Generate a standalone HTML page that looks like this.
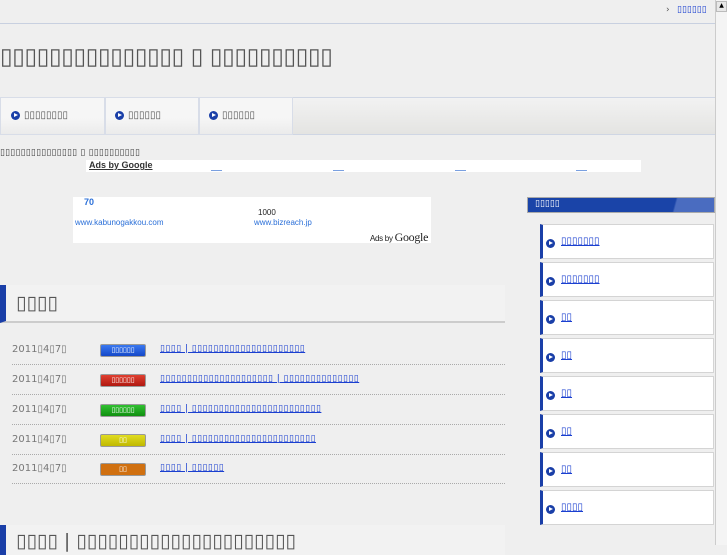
<!DOCTYPE html>
<html><head><meta charset="utf-8"><style>
*{margin:0;padding:0;box-sizing:border-box}
body{width:727px;height:545px;overflow:hidden;background:#efefef;font-family:"DejaVu Sans","Liberation Sans",sans-serif;color:#555;position:relative}
.a{position:absolute}
.t{font-size:10px;white-space:nowrap}
.lnk{color:#1a3fd0;text-decoration:underline}
.side{left:540px;width:174px;height:35px;background:#fff;border:1px solid #d4d4d4;border-left:3px solid #1a3fa8}
.side span{position:absolute;left:18px;top:11px;font-size:10px}
.dot{position:absolute;width:9px;height:9px;border-radius:50%;background:#1a3fa8}
.dot:after{content:"";position:absolute;left:3px;top:2px;border-left:4px solid #fff;border-top:2.5px solid transparent;border-bottom:2.5px solid transparent}
.badge{left:100px;width:46px;height:13px;border:1px solid #999;border-radius:2px;color:#fff;font-size:7px;text-align:center;line-height:11px}
.row{left:12px;width:493px;border-bottom:1px dotted #aaa}
.nl{font-size:9px;letter-spacing:0.45px}
</style></head><body>
<div class="a" style="left:0;top:23px;width:715px;border-top:1px solid #c8d0e0"></div>
<div class="a t" style="left:666px;top:5px;font-size:9px;color:#555">›</div>
<div class="a t" style="left:677px;top:5px;font-size:9px;color:#1a3fd0">▯▯▯▯▯▯</div>
<div class="a" style="left:715px;top:0;width:12px;height:545px;background:#f4f4f4;border-left:1px solid #ccc"></div>
<div class="a" style="left:716px;top:1px;width:11px;height:11px;background:#e8e8e8;border:1px solid #bbb;font-size:6px;text-align:center;color:#000">▲</div>
<div class="a" style="left:0;top:44px;font-size:23px;color:#555;white-space:nowrap;letter-spacing:-0.4px">▯▯▯▯▯▯▯▯▯▯▯▯▯▯▯ ▯ ▯▯▯▯▯▯▯▯▯▯</div>
<div class="a" style="left:0;top:97px;width:715px;height:38px;background:linear-gradient(#f2f2f2,#e4e4e2);border-top:1px solid #cfd6e4;border-bottom:1px solid #cfd6e4"></div>
<div class="a" style="left:0;top:97px;width:105px;height:38px;border:1px solid #d8dde8;background:linear-gradient(#f6f6f6 55%,#ebebeb)"></div>
<div class="a" style="left:105px;top:97px;width:94px;height:38px;border:1px solid #d8dde8;background:linear-gradient(#f6f6f6 55%,#ebebeb)"></div>
<div class="a" style="left:199px;top:97px;width:94px;height:38px;border:1px solid #d8dde8;background:linear-gradient(#f6f6f6 55%,#ebebeb)"></div>
<div class="dot" style="left:11px;top:111px"></div><div class="a t" style="left:24px;top:110px">▯▯▯▯▯▯▯▯</div>
<div class="dot" style="left:115px;top:111px"></div><div class="a t" style="left:128px;top:110px">▯▯▯▯▯▯</div>
<div class="dot" style="left:209px;top:111px"></div><div class="a t" style="left:222px;top:110px">▯▯▯▯▯▯</div>
<div class="a t" style="left:0;top:148px;font-size:9px;color:#444;letter-spacing:0.2px">▯▯▯▯▯▯▯▯▯▯▯▯▯▯▯ ▯ ▯▯▯▯▯▯▯▯▯▯</div>
<div class="a" style="left:86px;top:160px;width:555px;height:12px;background:#fff"></div>
<div class="a t" style="left:89px;top:160px;font-size:9px;font-weight:bold;color:#333;text-decoration:underline;font-family:'Liberation Sans',sans-serif">Ads by Google</div>
<div class="a" style="left:211px;top:170px;width:11px;border-top:1px solid #7aa0e0"></div>
<div class="a" style="left:333px;top:170px;width:11px;border-top:1px solid #7aa0e0"></div>
<div class="a" style="left:455px;top:170px;width:11px;border-top:1px solid #7aa0e0"></div>
<div class="a" style="left:576px;top:170px;width:11px;border-top:1px solid #7aa0e0"></div>
<div class="a" style="left:73px;top:197px;width:358px;height:46px;background:#fff"></div>
<div class="a t" style="left:84px;top:197px;font-size:9px;font-weight:bold;color:#2a6fd8;font-family:'Liberation Sans',sans-serif">70</div>
<div class="a t" style="left:258px;top:208px;font-size:8px;color:#222;font-family:'Liberation Sans',sans-serif">1000</div>
<div class="a t" style="left:75px;top:218px;font-size:8px;color:#2a6fd8;font-family:'Liberation Sans',sans-serif">www.kabunogakkou.com</div>
<div class="a t" style="left:254px;top:218px;font-size:8px;color:#2a6fd8;font-family:'Liberation Sans',sans-serif">www.bizreach.jp</div>
<div class="a t" style="left:370px;top:230px;font-size:8px;color:#222;font-family:'Liberation Sans',sans-serif;letter-spacing:-0.3px">Ads by <span style="font-family:'Liberation Serif',serif;font-size:12px">Google</span></div>
<div class="a" style="left:527px;top:197px;width:188px;height:16px;background:linear-gradient(105deg,#1a44a8 78%,#4a6cc0 79%);border:1px solid #aaa"></div>
<div class="a t" style="left:535px;top:199px;color:#fff;font-size:9px">▯▯▯▯▯</div>
<div class="a side" style="top:224px"><div class="dot" style="left:3px;top:14px"></div><span class="lnk">▯▯▯▯▯▯▯</span></div>
<div class="a side" style="top:262px"><div class="dot" style="left:3px;top:14px"></div><span class="lnk">▯▯▯▯▯▯▯</span></div>
<div class="a side" style="top:300px"><div class="dot" style="left:3px;top:14px"></div><span class="lnk">▯▯</span></div>
<div class="a side" style="top:338px"><div class="dot" style="left:3px;top:14px"></div><span class="lnk">▯▯</span></div>
<div class="a side" style="top:376px"><div class="dot" style="left:3px;top:14px"></div><span class="lnk">▯▯</span></div>
<div class="a side" style="top:414px"><div class="dot" style="left:3px;top:14px"></div><span class="lnk">▯▯</span></div>
<div class="a side" style="top:452px"><div class="dot" style="left:3px;top:14px"></div><span class="lnk">▯▯</span></div>
<div class="a side" style="top:490px"><div class="dot" style="left:3px;top:14px"></div><span class="lnk">▯▯▯▯</span></div>
<div class="a" style="left:0;top:285px;width:505px;height:38px;background:#f2f2f2;border-bottom:2px solid #ccc;border-left:6px solid #1a3fa8"></div>
<div class="a t" style="left:16px;top:292px;font-size:19px;color:#555">▯▯▯▯</div>
<div class="a row" style="top:340px;height:25px"></div>
<div class="a row" style="top:370px;height:25px"></div>
<div class="a row" style="top:400px;height:25px"></div>
<div class="a row" style="top:430px;height:25px"></div>
<div class="a row" style="top:460px;height:24px"></div>
<div class="a t" style="left:12px;top:344px;color:#777">2011▯4▯7▯</div>
<div class="a t" style="left:12px;top:374px;color:#777">2011▯4▯7▯</div>
<div class="a t" style="left:12px;top:404px;color:#777">2011▯4▯7▯</div>
<div class="a t" style="left:12px;top:434px;color:#777">2011▯4▯7▯</div>
<div class="a t" style="left:12px;top:463px;color:#777">2011▯4▯7▯</div>
<div class="a badge" style="top:344px;background:linear-gradient(#3a78f0,#1448c8)">▯▯▯▯▯▯</div>
<div class="a badge" style="top:374px;background:linear-gradient(#e04030,#b01810)">▯▯▯▯▯▯</div>
<div class="a badge" style="top:404px;background:linear-gradient(#30c030,#109010)">▯▯▯▯▯▯</div>
<div class="a badge" style="top:434px;background:linear-gradient(#e0dc20,#c0b800)">▯▯</div>
<div class="a badge" style="top:463px;background:#d07010">▯▯</div>
<div class="a t lnk nl" style="left:160px;top:344px">▯▯▯▯ | ▯▯▯▯▯▯▯▯▯▯▯▯▯▯▯▯▯▯▯▯▯</div>
<div class="a t lnk nl" style="left:160px;top:374px">▯▯▯▯▯▯▯▯▯▯▯▯▯▯▯▯▯▯▯▯▯ | ▯▯▯▯▯▯▯▯▯▯▯▯▯▯</div>
<div class="a t lnk nl" style="left:160px;top:404px">▯▯▯▯ | ▯▯▯▯▯▯▯▯▯▯▯▯▯▯▯▯▯▯▯▯▯▯▯▯</div>
<div class="a t lnk nl" style="left:160px;top:434px">▯▯▯▯ | ▯▯▯▯▯▯▯▯▯▯▯▯▯▯▯▯▯▯▯▯▯▯▯</div>
<div class="a t lnk nl" style="left:160px;top:463px">▯▯▯▯ | ▯▯▯▯▯▯</div>
<div class="a" style="left:0;top:525px;width:505px;height:30px;background:#f2f2f2;border-left:6px solid #1a3fa8"></div>
<div class="a t" style="left:16px;top:530px;font-size:19px;color:#555">▯▯▯▯ | ▯▯▯▯▯▯▯▯▯▯▯▯▯▯▯▯▯▯▯▯▯</div>
</body></html>
